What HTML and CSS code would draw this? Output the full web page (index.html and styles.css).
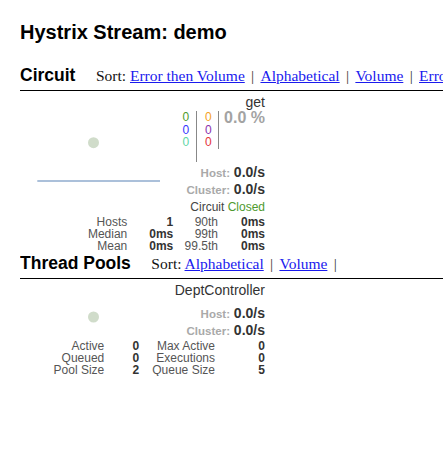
FILE: index.html
```html
<!DOCTYPE html>
<html lang="en">
<head>
<meta charset="utf-8">
<title>Hystrix Stream: demo</title>
<link rel="stylesheet" href="styles.css">
</head>
<body>
<h1 class="page-title">Hystrix Stream: demo</h1>

<section class="section">
  <div class="menubar">
    <h2 class="section-title">Circuit</h2>
    <div class="menu-actions">Sort: <a href="#">Error then Volume</a><span class="sep">|</span><a href="#">Alphabetical</a><span class="sep">|</span><a href="#">Volume</a><span class="sep">|</span><a href="#">Error</a><span class="sep">|</span><a href="#">Mean</a><span class="sep">|</span><a href="#">Median</a></div>
  </div>
  <div class="monitor">
    <svg class="chart" width="245" height="150" viewBox="0 0 245 150" aria-hidden="true">
      <rect x="17.3" y="89" width="122.7" height="2" fill="#abc0da"/>
      <circle cx="73.5" cy="51.7" r="5.5" fill="#d0dcca"/>
    </svg>
    <div class="name">get</div>
    <div class="counters">
      <div class="col col-a">
        <div class="success">0</div>
        <div class="short">0</div>
        <div class="bad">0</div>
      </div>
      <div class="col col-b">
        <div class="timeout">0</div>
        <div class="rejected">0</div>
        <div class="failure">0</div>
      </div>
      <div class="error-rate">0.0 %</div>
    </div>
    <div class="rate-row first"><span class="rate-label">Host:</span> <span class="rate-value">0.0/s</span></div>
    <div class="rate-row"><span class="rate-label">Cluster:</span> <span class="rate-value">0.0/s</span></div>
    <div class="status">Circuit <span class="closed">Closed</span></div>
    <div class="stats circuit-stats">
      <span class="lbl">Hosts</span><span class="val">1</span><span class="lbl">90th</span><span class="val">0ms</span>
      <span class="lbl">Median</span><span class="val">0ms</span><span class="lbl">99th</span><span class="val">0ms</span>
      <span class="lbl">Mean</span><span class="val">0ms</span><span class="lbl">99.5th</span><span class="val">0ms</span>
    </div>
  </div>
</section>

<section class="section">
  <div class="menubar">
    <h2 class="section-title">Thread Pools</h2>
    <div class="menu-actions">Sort: <a href="#">Alphabetical</a><span class="sep">|</span><a href="#">Volume</a><span class="sep">|</span></div>
  </div>
  <div class="monitor pool">
    <svg class="chart" width="245" height="100" viewBox="0 0 245 100" aria-hidden="true">
      <circle cx="73.5" cy="38" r="5.5" fill="#d0dcca"/>
    </svg>
    <div class="name">DeptController</div>
    <div class="rate-row first pool-first"><span class="rate-label">Host:</span> <span class="rate-value">0.0/s</span></div>
    <div class="rate-row"><span class="rate-label">Cluster:</span> <span class="rate-value">0.0/s</span></div>
    <div class="stats pool-stats">
      <span class="lbl">Active</span><span class="val">0</span><span class="lbl">Max Active</span><span class="val">0</span>
      <span class="lbl">Queued</span><span class="val">0</span><span class="lbl">Executions</span><span class="val">0</span>
      <span class="lbl">Pool Size</span><span class="val">2</span><span class="lbl">Queue Size</span><span class="val">5</span>
    </div>
  </div>
</section>
</body>
</html>
```

FILE: styles.css
```css
html, body {
  margin: 0;
  padding: 0;
  background: #ffffff;
}

body {
  padding-left: 20px;
  font-family: "Liberation Sans", Arial, sans-serif;
  color: #000;
  overflow: hidden;
}

.page-title {
  margin: 20px 0 0;
  font-size: 20px;
  line-height: 24px;
  font-weight: bold;
}

.section:first-of-type {
  margin-top: 20px;
}

.menubar {
  display: flex;
  align-items: baseline;
  white-space: nowrap;
  overflow: hidden;
  padding-bottom: 3px;
  border-bottom: 1px solid #000;
}

.section-title {
  margin: 0;
  font-size: 17.5px;
  line-height: 22px;
  font-weight: bold;
  flex: none;
}

.menu-actions {
  margin-left: 20.5px;
  font-family: "Liberation Serif", "Times New Roman", serif;
  font-size: 15.5px;
  line-height: 22px;
  color: #111;
  flex: none;
}

.menu-actions a {
  color: #1a1aee;
}

.sep {
  padding: 0 6.3px;
  color: #333;
}

.monitor {
  position: relative;
  width: 245px;
  padding-top: 3px;
}

.chart {
  position: absolute;
  left: 0;
  top: 0;
  z-index: 0;
}

.monitor > div {
  position: relative;
  z-index: 1;
}

.name {
  text-align: right;
  font-size: 14px;
  line-height: 16px;
  color: #333;
}

.counters {
  display: flex;
  justify-content: flex-end;
  align-items: flex-start;
  margin-top: 1px;
  font-size: 12px;
  line-height: 12.5px;
}

.col-a {
  padding-right: 7px;
}

.col-b {
  height: 51px;
  box-sizing: border-box;
  padding: 0 6px 0 8px;
  border-left: 1px solid #888;
}

.success { color: #4f9b2c; }
.short { color: #3636ff; }
.bad { color: #5ed6a6; }
.timeout { color: #f4a21e; }
.rejected { color: #8b32ad; }
.failure { color: #e4343a; }

.error-rate {
  height: 38px;
  box-sizing: border-box;
  padding-left: 5.3px;
  border-left: 1px solid #888;
  font-size: 16px;
  line-height: 14px;
  font-weight: bold;
  color: #a3a3a3;
}

.rate-row {
  text-align: right;
  font-size: 14px;
  line-height: 17.3px;
  height: 17.3px;
}

.rate-row.first {
  margin-top: 2px;
}

.rate-row.pool-first {
  margin-top: 6.5px;
}

.rate-label {
  font-size: 11.5px;
  line-height: 1;
  font-weight: bold;
  color: #a9a9a9;
}

.rate-value {
  font-weight: bold;
  color: #333;
}

.status {
  margin-top: 1.2px;
  text-align: right;
  font-size: 12px;
  line-height: 14px;
  color: #444;
}

.closed {
  color: #4e9a2e;
}

.stats {
  display: grid;
  font-size: 12px;
  line-height: 11.7px;
  text-align: right;
}

.circuit-stats {
  margin-top: 3.5px;
  grid-template-columns: 107.3px 46px 44.7px 47px;
}

.pool-stats {
  margin-top: 1.5px;
  grid-template-columns: 84.3px 35px 75.7px 50px;
  line-height: 11.8px;
}

.lbl {
  color: #555;
}

.val {
  font-weight: bold;
  color: #333;
}
```
